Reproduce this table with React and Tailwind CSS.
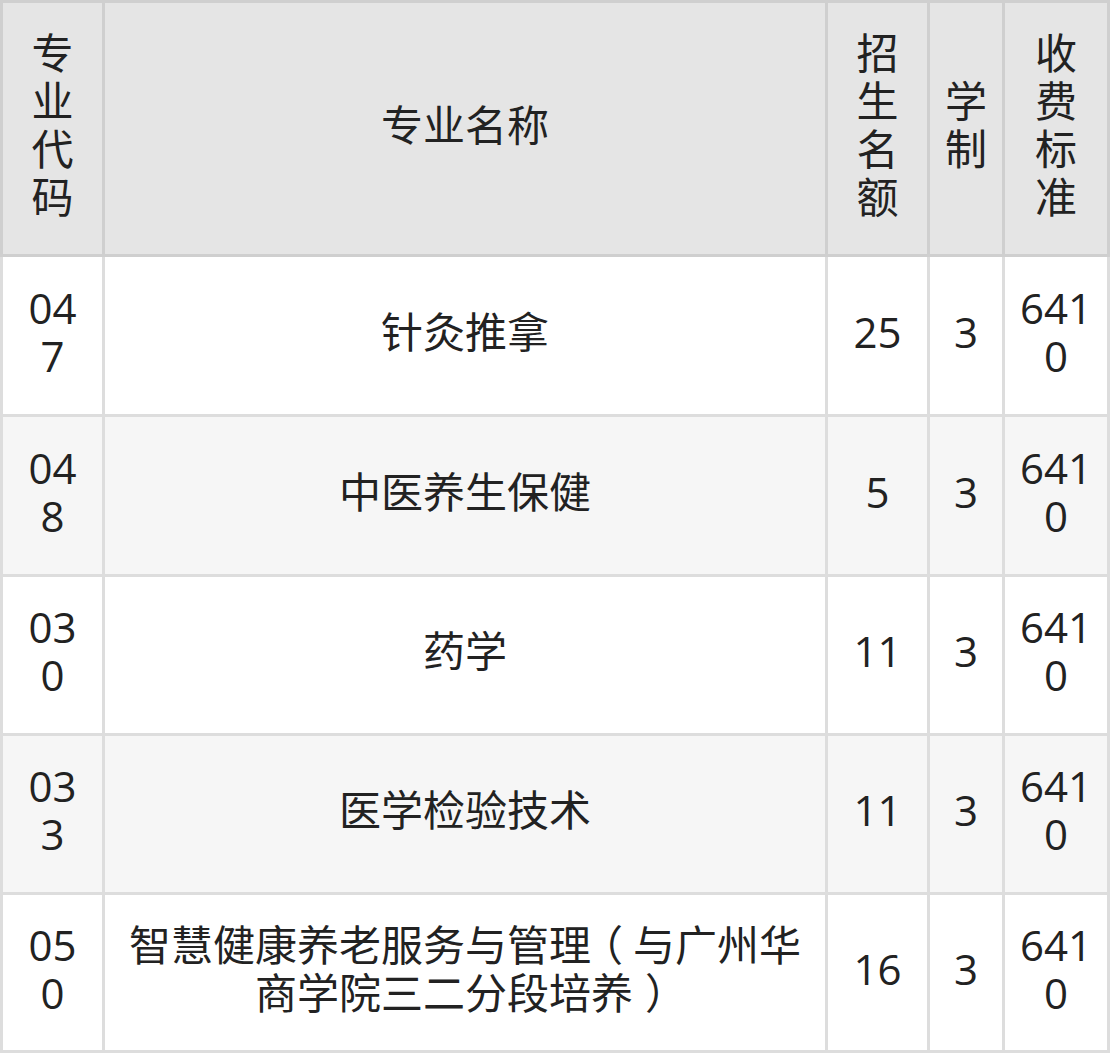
import React from 'react';

// full-width parens are centred in their box in the reference rendering
const OpenParen = () => <span className="-ml-[10px] mr-[10px]">（</span>;
const CloseParen = () => <span className="ml-[12px] -mr-[12px]">）</span>;

const rows = [
  { code: '047', name: '针灸推拿', count: '25', years: '3', fee: '6410', h: 'h-[160px]' },
  { code: '048', name: '中医养生保健', count: '5', years: '3', fee: '6410', h: 'h-[160px]' },
  { code: '030', name: '药学', count: '11', years: '3', fee: '6410', h: 'h-[159px]' },
  { code: '033', name: '医学检验技术', count: '11', years: '3', fee: '6410', h: 'h-[159px]' },
  {
    code: '050',
    name: (
      <>
        智慧健康养老服务与管理<OpenParen />与广州华商学院三二分段培养<CloseParen />
      </>
    ),
    count: '16',
    years: '3',
    fee: '6410',
    h: 'h-[158px]',
  },
];

const cellBase = 'flex items-center justify-center text-center break-all pb-[8px] border-r-[3px] border-b-[3px]';

const Cell = ({ className, children }) => (
  <div className={`${cellBase} ${className}`}>
    <div>{children}</div>
  </div>
);

export default function App() {
  return (
    <div
      className="w-[1110px] text-[42px] leading-[48px] text-[#222222]"
      style={{ fontFamily: '"Open Sans", "Noto Sans CJK SC", sans-serif' }}
    >
      <div className="grid grid-cols-[105px_723px_102px_75px_105px]">
        {/* Header */}
        <Cell className="px-[15px] h-[257px] bg-[#e5e5e5] border-[#cfcfcf] border-l-[3px] border-t-[3px]">专业代码</Cell>
        <Cell className="px-[15px] h-[257px] bg-[#e5e5e5] border-[#cfcfcf] border-t-[3px]">专业名称</Cell>
        <Cell className="px-[15px] h-[257px] bg-[#e5e5e5] border-[#cfcfcf] border-t-[3px]">招生名额</Cell>
        <Cell className="px-[12px] h-[257px] bg-[#e5e5e5] border-[#cfcfcf] border-t-[3px]">学制</Cell>
        <Cell className="px-[15px] h-[257px] bg-[#e5e5e5] border-[#cfcfcf] border-t-[3px]">收费标准</Cell>

        {rows.map((r, i) => {
          const bg = i % 2 === 1 ? 'bg-[#f6f6f6]' : 'bg-white';
          return (
            <React.Fragment key={r.code}>
              <Cell className={`px-[15px] ${r.h} ${bg} border-[#dddddd] border-l-[3px]`}>{r.code}</Cell>
              <Cell className={`px-[20px] ${r.h} ${bg} border-[#dddddd]`}>{r.name}</Cell>
              <Cell className={`px-[15px] ${r.h} ${bg} border-[#dddddd]`}>{r.count}</Cell>
              <Cell className={`px-[12px] ${r.h} ${bg} border-[#dddddd]`}>{r.years}</Cell>
              <Cell className={`px-[10px] ${r.h} ${bg} border-[#dddddd]`}>{r.fee}</Cell>
            </React.Fragment>
          );
        })}
      </div>
    </div>
  );
}
